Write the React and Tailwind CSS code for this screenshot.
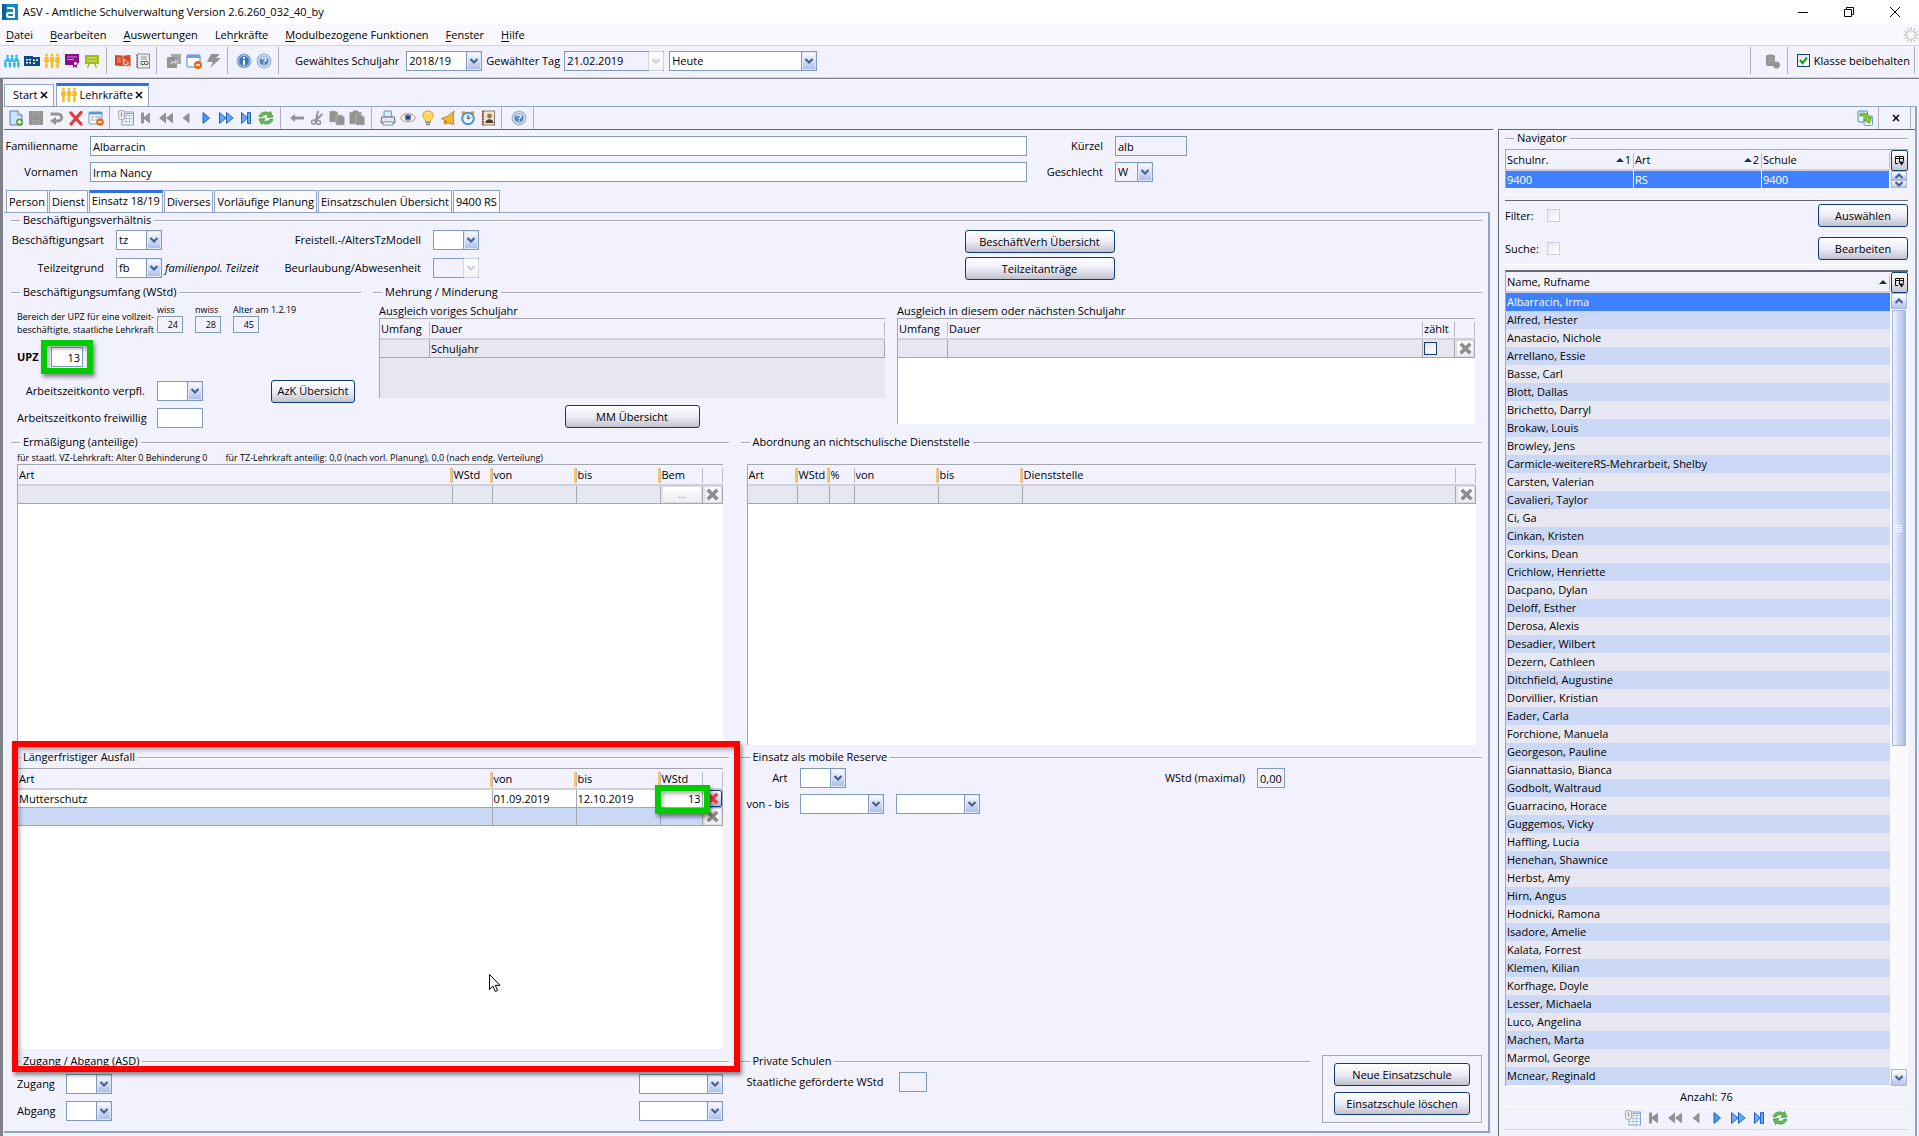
import React, { useState } from 'react';
import clsx from 'clsx';

const names = [
  'Albarracin, Irma', 'Alfred, Hester', 'Anastacio, Nichole', 'Arrellano, Essie', 'Basse, Carl',
  'Blott, Dallas', 'Brichetto, Darryl', 'Brokaw, Louis', 'Browley, Jens',
  'Carmicle-weitereRS-Mehrarbeit, Shelby', 'Carsten, Valerian', 'Cavalieri, Taylor', 'Ci, Ga',
  'Cinkan, Kristen', 'Corkins, Dean', 'Crichlow, Henriette', 'Dacpano, Dylan', 'Deloff, Esther',
  'Derosa, Alexis', 'Desadier, Wilbert', 'Dezern, Cathleen', 'Ditchfield, Augustine',
  'Dorvillier, Kristian', 'Eader, Carla', 'Forchione, Manuela', 'Georgeson, Pauline',
  'Giannattasio, Bianca', 'Godbolt, Waltraud', 'Guarracino, Horace', 'Guggemos, Vicky',
  'Haffling, Lucia', 'Henehan, Shawnice', 'Herbst, Amy', 'Hirn, Angus', 'Hodnicki, Ramona',
  'Isadore, Amelie', 'Kalata, Forrest', 'Klemen, Kilian', 'Korfhage, Doyle', 'Lesser, Michaela',
  'Luco, Angelina', 'Machen, Marta', 'Marmol, George', 'Mcnear, Reginald',
];

const menu = [
  ['', 'D', 'atei'],
  ['', 'B', 'earbeiten'],
  ['', 'A', 'uswertungen'],
  ['Leh', 'r', 'kräfte'],
  ['', 'M', 'odulbezogene Funktionen'],
  ['', 'F', 'enster'],
  ['', 'H', 'ilfe'],
];

const subTabs = ['Person', 'Dienst', 'Einsatz 18/19', 'Diverses', 'Vorläufige Planung', 'Einsatzschulen Übersicht', '9400 RS'];

/* ---------- Icons ---------- */

const G = '#939393';

const people = (x, c, s = 0) => (
  <g key={x} fill={c}>
    <circle cx={x} cy={2 + s} r="1.5" />
    <path d={`M${x - 2} ${4 + s}h4l.4 5h-1.2v${6 - s}h-2.4v-${6 - s}h-1.2z`} />
  </g>
);

const glyphs = {
  class: (
    <g fill="#2fb4e6">
      {[2, 6.5, 11].map((x) => (
        <g key={x}>
          <circle cx={x + 1.5} cy="3" r="1.3" />
          <path d={`M${x} 4.6h3v4h-3z`} />
        </g>
      ))}
      {[0, 4.5, 9, 13].map((x) => (
        <g key={x}>
          <circle cx={x + 1.3} cy="8.4" r="1.3" />
          <path d={`M${x} 10h2.8l-.4 4.5h-2z`} />
        </g>
      ))}
    </g>
  ),
  school: (
    <g>
      <path d="M0 3h9v1h7v9H0z" fill="#0f4c8a" />
      <path d="M2 6h2v1.500H2zM5 6h2v1.500H5zM2 9h2v1.500H2zM5 9h2v1.500H5zM9 6.500h2V8H9zM12 6.500h2V8h-2zM9 9.500h2V11H9z" fill="#fff" />
    </g>
  ),
  teachers: <g>{[2.500, 8, 13.500].map((x) => people(x, '#f9bd16'))}</g>,
  purple: (
    <g>
      <path d="M1 1h14v9h-2v5l-2-1.500L9 15v-3H1z" fill="#86118b" />
      <path d="M3 4h10M3 6.500h7" stroke="#c98ccb" />
      <circle cx="11.500" cy="10.500" r="2" fill="#fff" stroke="#86118b" />
    </g>
  ),
  board: (
    <g>
      <path d="M1 2h14v9h-3l1 4h-1l-2-4H6l-2 4H3l1-4H1z" fill="#9fbf10" />
      <path d="M3 5h10M3 8h10" stroke="#dce9a3" />
    </g>
  ),
  redBook: (
    <g>
      <path d="M0 2l7 .5 1 .5 1-.5 6.500-.5v11L9 13l-1 .5L7 13l-7-.5z" fill="#d9441f" />
      <path d="M8 3v10M2 5h4M2 7h4M2 9h4" stroke="#f6a48d" />
      <path d="M9 6l5 4-2 .2 2 3.500-1.500.8-1.500-3.500L9.500 12z" fill="#d9441f" stroke="#fff" strokeWidth=".7" />
    </g>
  ),
  notebook: (
    <g>
      <rect x="2.500" y="1" width="12" height="14" fill="#e9e9ec" stroke="#8a8a8e" />
      <path d="M2 2v13" stroke="#777" strokeWidth="2" strokeDasharray="1.200 1" />
      <path d="M6 4h6M6 6h6" stroke="#99a" />
      <rect x="6" y="8.500" width="3.500" height="3" fill="none" stroke="#555" rx="1" />
      <rect x="9.500" y="8.500" width="3.500" height="3" fill="none" stroke="#555" rx="1" />
    </g>
  ),
  windowsGray: (
    <g fill={G}>
      <path d="M5 1h10v10H5z" opacity=".8" />
      <rect x="1" y="4" width="10" height="11" rx="1" />
      <path d="M4 12c0-4 3-4 5-4V6l3 3-3 3v-2c-2 0-3 0-5 2z" fill="#c9c9d0" />
    </g>
  ),
  windowMinus: (
    <g>
      <rect x="1" y="2" width="13" height="12" rx="1" fill="#fff" stroke="#4e82c6" />
      <path d="M1 2h13v3H1z" fill="#6da0dd" />
      <circle cx="12" cy="12" r="4" fill="#e5681d" />
      <path d="M10 12h4" stroke="#fff" strokeWidth="1.500" />
    </g>
  ),
  bolt: <path d="M5 1h9l-4 4h5L4 15l3-6H1z" fill={G} />,
  info: (
    <g>
      <circle cx="8" cy="8" r="7" fill="#4a86c6" stroke="#9fb6d0" />
      <circle cx="8" cy="8" r="5.500" fill="#3f78b8" stroke="#dbe8f6" strokeWidth=".8" />
      <path d="M8 7v5M8 4v1.800" stroke="#fff" strokeWidth="2" />
    </g>
  ),
  help: (
    <g>
      <circle cx="8" cy="8" r="7" fill="#8fb0d6" stroke="#9fb6d0" />
      <circle cx="8" cy="8" r="5.300" fill="#4f86c2" stroke="#e6effa" strokeWidth="1.200" />
      <path d="M6 6.600c0-2.600 4-2.400 4-.2 0 1.400-2 1.400-2 2.800M8 10.400v1.400" stroke="#fff" strokeWidth="1.400" fill="none" />
    </g>
  ),
  server: (
    <g fill={G}>
      <path d="M2 3c0-2 9-2 9 0v10H4c-2 0-2-2-2-3z" />
      <path d="M4 5h6M4 7.500h6M4 10h5" stroke="#a6a6aa" strokeWidth=".8" />
      <circle cx="12.500" cy="12" r="3.500" />
    </g>
  ),
  newDoc: (
    <g>
      <path d="M2 1h8l4 4v10H2z" fill="#cfe4fa" stroke="#4a7fc0" />
      <path d="M10 1v4h4" fill="#fff" stroke="#4a7fc0" />
      <circle cx="11.500" cy="12" r="3.500" fill="#58a13a" />
      <path d="M11.500 10v4M9.500 12h4" stroke="#fff" strokeWidth="1.300" />
    </g>
  ),
  save: (
    <g>
      <path d="M1 1h14v14H2l-1-1z" fill={G} />
      <path d="M4 1.500h8v5H4zM4 10h8v5H4z" fill="#a1a1a5" />
      <path d="M5 3h6M5 5h6M5 12h6" stroke="#8a8a8a" strokeWidth=".8" />
    </g>
  ),
  undo: (
    <g>
      <path d="M2.500 4H10c5 0 5 7 0 7H7" fill="none" stroke={G} strokeWidth="2.800" />
      <path d="M8 7v8l-6-4z" fill={G} />
    </g>
  ),
  redX: <path d="M3 3l10 11M13 2.500L3 14" stroke="#e8383c" strokeWidth="3.200" strokeLinecap="round" />,
  form: (
    <g>
      <rect x="1" y="2" width="13" height="12" rx="1" fill="#fff" stroke="#6c98cf" />
      <path d="M1 2h13v2.500H1z" fill="#5e93d6" />
      <path d="M3 7h3M7 7h6M3 10h3M7 10h4" stroke="#6c98cf" strokeWidth="1.200" />
      <circle cx="12" cy="12" r="3.800" fill="#e5681d" />
      <path d="M10 12h4" stroke="#fff" strokeWidth="1.500" />
    </g>
  ),
  table: (
    <g>
      <rect x="4" y="2" width="11.500" height="13" fill="#fff" stroke="#7fa3d1" />
      <path d="M4 5.500h11M4 8.500h11M4 11.500h11M8 2v13M11.500 5v10" stroke="#a9c4e6" />
      <path d="M8 3.500h7" stroke="#7db36b" />
      <rect x=".5" y=".5" width="6" height="9" rx="2" fill="#ececec" stroke="#a9a9a9" />
      <path d="M3.500 2.500v4" stroke="#888" />
    </g>
  ),
  first: <path d="M3 2.500h3V7l6-4.500v11L6 9v4.500H3z" fill={G} />,
  back2: <path d="M8 2.500v11L1 8zM15 2.500v11L8 8z" fill={G} />,
  back: <path d="M11.500 2.500v11L4.500 8z" fill={G} />,
  next: <path d="M5 2.500v11L11.500 8z" fill="#4d95f0" stroke="#1f63c8" />,
  fwd2: <path d="M1.500 2.500v11L8 8zM8.500 2.500v11L15 8z" fill="#6aa9f5" stroke="#1f63c8" />,
  last: <path d="M3.500 2.500v11L9.500 8v5.500h3v-11h-3V8z" fill="#6aa9f5" stroke="#1f63c8" />,
  refresh: (
    <g fill="#6cba57" stroke="#3b8a35" strokeWidth=".7">
      <path d="M1 6.500C3 1.500 8 1 11 3l1.500-1.500L15 7l-6 .5L10.500 5.500C8 4 5 4.500 4 7z" />
      <path d="M15 9.500c-2 5-7 5.500-10 3.500l-1.500 1.500L1 9l6-.5-1.500 2c2.500 1.500 5.500 1 6.500-1.500z" />
    </g>
  ),
  arrow: <path d="M1 8l5-4v2.500h9v3H6V12z" fill={G} />,
  scissors: (
    <g stroke={G} fill="none">
      <path d="M9 1l-2 9M13.500 4L6 11" strokeWidth="2" />
      <circle cx="4.500" cy="12" r="2" strokeWidth="1.600" />
      <circle cx="9.500" cy="12.500" r="2" strokeWidth="1.600" />
    </g>
  ),
  copy: (
    <g fill={G} stroke="#c3c3c8" strokeWidth=".6">
      <path d="M.5 1H7l2 2v9H.5z" />
      <path d="M7 5h6l2.500 2.500V15H7z" />
    </g>
  ),
  paste: (
    <g fill={G} stroke="#c3c3c8" strokeWidth=".6">
      <path d="M.5 2h3l1-1.500h4l1 1.500h3v12H.5z" />
      <path d="M7 5h6l2.500 2.500V15H7z" />
    </g>
  ),
  printer: (
    <g>
      <path d="M4 1h7l1 6H4z" fill="#dcecfb" stroke="#6d90ba" />
      <path d="M1.500 7h13l.5 6H1z" fill="#e4e6ea" stroke="#666d78" />
      <path d="M3 12h10v3H3z" fill="#fff" stroke="#6d90ba" />
    </g>
  ),
  eye: (
    <g>
      <path d="M.5 8c3.500-6 11.500-6 15 0-3.500 5-11.500 5-15 0z" fill="#fff" stroke="#dcae8a" strokeWidth="1.300" />
      <circle cx="8" cy="7.500" r="3.300" fill="#4b7fc9" />
      <circle cx="8" cy="7.500" r="1.400" fill="#16294a" />
    </g>
  ),
  bulb: (
    <g>
      <path d="M8 1c6 0 6.500 6 2.500 9v2h-5v-2C1.500 7 2 1 8 1z" fill="#ffd75e" stroke="#e29a1c" />
      <path d="M5.500 12.500h5M6 14.500h4" stroke="#85878d" strokeWidth="1.600" />
      <path d="M6 4c.5-1 1.500-1.300 2.500-1.300" stroke="#fff" fill="none" />
    </g>
  ),
  bell: (
    <g>
      <path d="M14 1c-1 5-1 9 0 13.500L8.500 13 1.500 8.500C6 7.500 10 5 14 1z" fill="#f4b73a" stroke="#c9821a" />
      <circle cx="5.500" cy="12.500" r="2" fill="#d98b1d" />
    </g>
  ),
  clock: (
    <g>
      <circle cx="3.500" cy="3" r="2" fill="#e59f2d" />
      <circle cx="12.500" cy="3" r="2" fill="#e59f2d" />
      <circle cx="8" cy="8.500" r="5.800" fill="#eaf4fd" stroke="#4b93cf" strokeWidth="2" />
      <path d="M8 5v4l2.500-1.500" stroke="#234" fill="none" />
    </g>
  ),
  contact: (
    <g>
      <rect x="2.500" y="1" width="12" height="14" fill="#ece6dd" stroke="#8a7a6a" />
      <path d="M3 1v14" stroke="#b5432a" strokeWidth="2" strokeDasharray="1.500 1" />
      <circle cx="9.500" cy="6" r="2.400" fill="#b07038" />
      <path d="M5.500 13c0-5 8-5 8 0z" fill="#4a3a30" />
    </g>
  ),
  exportDoc: (
    <g>
      <rect x="1" y="1" width="9.500" height="11" rx="1" fill="#e6f1fc" stroke="#4a86c6" />
      <rect x="7" y="6" width="8.500" height="9.500" rx="1" fill="#e6f1fc" stroke="#6a9ed6" />
      <path d="M3 3.500c5-1 8 0 9 4l2.500-.5-2 6-6-3 2.500-1C8 6.500 6 5 3 6z" fill="#8fd21f" stroke="#3b8f1b" strokeWidth=".8" />
    </g>
  ),
};

const Icon = ({ name, className = 'size-4' }) => (
  <svg viewBox="0 0 16 16" className={className} aria-hidden="true">{glyphs[name]}</svg>
);

const ToolButton = ({ name }) => (
  <button type="button" aria-label={name} className="flex h-5 w-5 shrink-0 items-center justify-center">
    <Icon name={name} />
  </button>
);

const Sep = ({ className = 'mx-[5px]' }) => (
  <span className={clsx('w-px shrink-0 self-stretch bg-[#b0b0b8]', className)} />
);

const Chevron = ({ up = false, className = 'text-[#44618f]' }) => (
  <svg viewBox="0 0 10 8" className={clsx('h-2 w-[10px]', className)} aria-hidden="true">
    <path d={up ? 'M1.500 6L5 2.500 8.500 6' : 'M1.500 2L5 5.500 8.500 2'} fill="none" stroke="currentColor" strokeWidth="2.200" />
  </svg>
);

/* ---------- Form controls ---------- */

const Combo = ({ id, label, value = '', width = 'w-[46px]', disabled = false, light = true }) => (
  <div className={clsx('relative h-5 shrink-0', width)}>
    <select
      id={id}
      aria-label={label}
      defaultValue={value}
      disabled={disabled}
      className={clsx(
        'h-full w-full appearance-none border border-[#7f9aba] pr-4 pl-[2px] text-black opacity-100',
        disabled || !light ? 'bg-[#f2f2ff]' : 'bg-white'
      )}
    >
      <option value={value}>{value}</option>
    </select>
    <span
      className={clsx(
        'pointer-events-none absolute inset-y-0 right-0 flex w-4 items-center justify-center rounded-[2px] border bg-linear-to-b',
        disabled
          ? 'border-[#d5d5de] from-white to-[#f2f2f8]'
          : 'border-[#7f9aba] from-white to-[#a9bbe6] shadow-[inset_0_0_0_1px_#dfe7fa]'
      )}
    >
      <Chevron className={disabled ? 'text-[#d0d0d8]' : 'text-[#44618f]'} />
    </span>
  </div>
);

const TextBox = ({ id, label, value = '', className, plain = false }) => (
  <input
    id={id}
    aria-label={label}
    type="text"
    defaultValue={value}
    className={clsx('h-5 min-w-0 border border-[#7f9aba] px-[2px]', plain ? 'bg-[#f2f2ff]' : 'bg-white', className)}
  />
);

const Button = ({ children, className }) => (
  <button
    type="button"
    className={clsx(
      'h-[23px] shrink-0 rounded-[3px] border border-[#123c78] bg-linear-to-b from-white via-[#ececf6] to-[#c2c2cf] whitespace-nowrap',
      className
    )}
  >
    {children}
  </button>
);

const Check = ({ id, label, checked = false, muted = false }) => (
  <span className="relative inline-flex size-[13px] shrink-0">
    <input
      id={id}
      aria-label={label}
      type="checkbox"
      defaultChecked={checked}
      className={clsx(
        'peer size-full appearance-none border bg-linear-to-br from-[#e8e8ec] to-white',
        muted ? 'border-[#cfcfd6]' : 'border-[#123c78]'
      )}
    />
    <svg viewBox="0 0 13 13" className="pointer-events-none absolute inset-0 hidden peer-checked:block" aria-hidden="true">
      <path d="M3 6l2.500 3L10 3.500" fill="none" stroke="#1ea01e" strokeWidth="2.200" />
    </svg>
  </span>
);

const Rule = ({ className }) => <span className={clsx('h-0 border-t border-[#a8a8b0] shadow-[0_1px_0_#fff]', className)} />;

const Group = ({ title, className, children }) => (
  <section className={clsx('flex min-w-0 flex-col', className)}>
    <h2 className="flex h-[14px] shrink-0 items-center gap-[3px] whitespace-nowrap">
      <Rule className="w-[9px]" />
      {title}
      <Rule className="flex-1" />
    </h2>
    {children}
  </section>
);

/* ---------- Tables ---------- */

const DeleteButton = ({ active = false }) => (
  <button
    type="button"
    aria-label="Löschen"
    className={clsx(
      'flex h-[17px] w-full items-center justify-center rounded-[2px] border bg-linear-to-b',
      active ? 'border-[#123c78] from-white to-[#a9bbe6]' : 'border-[#dcdce2] from-white to-[#ececf2]'
    )}
  >
    <svg viewBox="0 0 14 14" className="size-[15px] shrink-0" aria-hidden="true">
      <path d="M2.500 2.500l9 9M11.500 2.500l-9 9" stroke={active ? '#e8464a' : '#8d8d8d'} strokeWidth="3.400" />
    </svg>
  </button>
);

const Grid = ({ cols, rows, className }) => (
  <div className={clsx('border-t border-l border-[#a6a6ae]', className)}>
    <table className="w-full table-fixed border-separate border-spacing-0">
      <colgroup>
        {cols.map((c, i) => <col key={i} className={c.w} />)}
      </colgroup>
      <thead>
        <tr className="bg-[#f2f2ff]">
          {cols.map((c, i) => (
            <th key={i} className="relative h-[21px] overflow-hidden border-b-2 border-[#cfcfdb] p-0 pl-px text-left font-normal whitespace-nowrap">
              {c.name}
              <span className="absolute top-[3px] right-0 bottom-px w-px bg-[#b9b9c4]" />
              {cols[i + 1]?.mark && <span className="absolute top-[3px] right-px bottom-px w-[2px] bg-[#fcc463]" />}
            </th>
          ))}
        </tr>
      </thead>
      <tbody>
        {rows.map((row, r) => (
          <tr key={r} className={row.bg}>
            {row.cells.map((cell, i) => (
              <td key={i} className={clsx('h-[18px] border-r border-b border-[#a6a6ae] p-0 pl-px whitespace-nowrap', cols[i].right && 'pr-px text-right')}>
                {cell}
              </td>
            ))}
          </tr>
        ))}
      </tbody>
    </table>
  </div>
);

const gray = 'bg-[#e7e7f1]';

const Highlight = ({ className }) => (
  <span className={clsx('pointer-events-none absolute z-10 border-6 shadow-[2px_3px_4px_rgba(0,0,0,0.45),inset_2px_3px_4px_rgba(0,0,0,0.3)]', className)} />
);

/* ---------- Sections ---------- */

const TitleBar = () => (
  <header className="flex h-[23px] items-center bg-white pr-[18px] pl-[2px]">
    <svg viewBox="0 0 16 16" className="size-4" aria-hidden="true">
      <rect width="16" height="16" fill="#1787c0" />
      <path d="M0 0h4v16H0z" fill="#0d5f96" />
      <path d="M5 4h5q2 0 2 2v7H7q-2 0-2-2t2-2h4" fill="none" stroke="#fff" strokeWidth="2" />
    </svg>
    <h1 className="ml-[5px]">ASV - Amtliche Schulverwaltung Version 2.6.260_032_40_by</h1>
    <div className="ml-auto flex items-center gap-[34px]">
      <button type="button" aria-label="Minimieren">
        <svg viewBox="0 0 12 12" className="size-3"><path d="M1 6.500h10" stroke="#000" /></svg>
      </button>
      <button type="button" aria-label="Wiederherstellen">
        <svg viewBox="0 0 12 12" className="size-3"><path d="M1.500 3.500h7v7h-7zM3.500 3.500v-2h7v7h-2" fill="none" stroke="#000" /></svg>
      </button>
      <button type="button" aria-label="Schließen">
        <svg viewBox="0 0 12 12" className="size-3"><path d="M1 1l10 10M11 1L1 11" stroke="#000" /></svg>
      </button>
    </div>
  </header>
);

const MenuBar = () => (
  <nav className="flex h-[23px] items-center gap-[17px] border-b border-[#d4d4de] bg-[#f9f9ff] pt-[2px] pl-[6px]">
    {menu.map(([pre, key, post]) => (
      <a key={post} href="#" className="whitespace-nowrap">
        {pre}<u className="underline-offset-2">{key}</u>{post}
      </a>
    ))}
    <svg viewBox="0 0 16 16" className="ml-auto size-4" aria-hidden="true">
      <g stroke="#b9b9bd" strokeWidth="1.200">
        {[0, 30, 60, 90, 120, 150, 180, 210, 240, 270, 300, 330].map((a) => (
          <path key={a} d="M8 .5v4" transform={`rotate(${a} 8 8)`} />
        ))}
      </g>
    </svg>
  </nav>
);

const MainToolbar = () => (
  <div className="flex h-8 items-center border-b border-[#cfcfda] pt-px pb-[3px] pl-[2px]">
    {['class', 'school', 'teachers', 'purple', 'board'].map((n) => <ToolButton key={n} name={n} />)}
    <Sep className="mr-[6px] ml-1" />
    {['redBook', 'notebook'].map((n) => <ToolButton key={n} name={n} />)}
    <Sep className="mr-[7px] ml-[3px]" />
    {['windowsGray', 'windowMinus', 'bolt'].map((n) => <ToolButton key={n} name={n} />)}
    <Sep className="mr-[6px] ml-[3px]" />
    {['info', 'help'].map((n) => <ToolButton key={n} name={n} />)}
    <Sep className="mr-4 ml-1" />
    <label htmlFor="jahr" className="mr-[7px] whitespace-nowrap">Gewähltes Schuljahr</label>
    <Combo id="jahr" value="2018/19" width="w-[76px]" />
    <label htmlFor="tag" className="mx-1 whitespace-nowrap">Gewählter Tag</label>
    <Combo id="tag" value="21.02.2019" width="w-[100px]" disabled />
    <span className="w-[5px]" />
    <Combo id="heute" label="Heute" value="Heute" width="w-[148px]" />
    <Sep className="mr-[11px] ml-auto" />
    <ToolButton name="server" />
    <Sep className="mr-[9px] ml-[5px]" />
    <Check id="klasse" checked />
    <label htmlFor="klasse" className="ml-1 whitespace-nowrap">Klasse beibehalten</label>
    <Sep className="mr-1 ml-1" />
  </div>
);

const CloseX = () => (
  <svg viewBox="0 0 8 8" className="size-2" aria-hidden="true"><path d="M1 1l6 6M7 1L1 7" stroke="#000" strokeWidth="1.500" /></svg>
);

const DocTabs = () => (
  <div className="flex h-[27px] items-end gap-[2px]">
    <div className="flex h-[22px] items-center gap-[3px] border border-b-0 border-[#8fa3c4] bg-[#fafaff] pr-[5px] pb-[2px] pl-2">
      Start
      <button type="button" aria-label="Start schließen"><CloseX /></button>
    </div>
    <div className="flex h-[23px] items-center gap-[2px] border border-t-3 border-b-0 border-[#8fa3c4] border-t-[#2f6fea] bg-white pr-[5px] pb-[3px] pl-1">
      <Icon name="teachers" />
      Lehrkräfte
      <button type="button" aria-label="Lehrkräfte schließen"><CloseX /></button>
    </div>
  </div>
);

const EditToolbar = () => (
  <div className="flex h-[23px] items-center border-t border-[#8fa3c4] pl-[2px]">
    {['newDoc', 'save', 'undo', 'redX', 'form'].map((n) => <ToolButton key={n} name={n} />)}
    <Sep className="mr-[6px] ml-[3px]" />
    {['table', 'first', 'back2', 'back', 'next', 'fwd2', 'last', 'refresh'].map((n) => <ToolButton key={n} name={n} />)}
    <Sep className="mr-[6px] ml-1" />
    {['arrow', 'scissors', 'copy', 'paste'].map((n) => <ToolButton key={n} name={n} />)}
    <Sep className="mr-[6px] ml-1" />
    {['printer', 'eye', 'bulb', 'bell', 'clock', 'contact'].map((n) => <ToolButton key={n} name={n} />)}
    <Sep className="mr-[7px] ml-[3px]" />
    <ToolButton name="help" />
    <Sep className="ml-1" />
    <div className="ml-auto flex items-center self-stretch">
      <ToolButton name="exportDoc" />
      <Sep className="mr-[13px] ml-[3px]" />
      <button type="button" aria-label="Navigator schließen"><CloseX /></button>
      <Sep className="mr-1 ml-[10px]" />
    </div>
  </div>
);

const Verhaeltnis = () => (
  <Group title="Beschäftigungsverhältnis">
    <div className="flex pt-[3px] pb-[5px]">
      <div className="grid grid-cols-[93px_46px_auto] content-start items-center gap-y-2">
        <label htmlFor="art" className="text-right">Beschäftigungsart</label>
        <span className="pl-3"><Combo id="art" value="tz" /></span>
        <span />
        <label htmlFor="grund" className="text-right">Teilzeitgrund</label>
        <span className="pl-3"><Combo id="grund" value="fb" /></span>
        <i className="w-[122px] pl-[15px] whitespace-nowrap">familienpol. Teilzeit</i>
      </div>
      <div className="grid grid-cols-[138px_58px] content-start items-center gap-y-2 pl-[11px]">
        <label htmlFor="modell" className="text-right whitespace-nowrap">Freistell.-/AltersTzModell</label>
        <span className="pl-3"><Combo id="modell" /></span>
        <label htmlFor="beurl" className="text-right whitespace-nowrap">Beurlaubung/Abwesenheit</label>
        <span className="pl-3"><Combo id="beurl" disabled /></span>
      </div>
      <div className="flex flex-1 justify-center pl-[118px]">
        <div className="flex flex-col gap-1">
          <Button className="w-[150px]">BeschäftVerh Übersicht</Button>
          <Button className="w-[150px]">Teilzeitanträge</Button>
        </div>
      </div>
    </div>
  </Group>
);

const Umfang = () => (
  <Group title="Beschäftigungsumfang (WStd)" className="w-[350px] shrink-0">
    <div className="flex flex-col pt-[5px] pb-[7px] pl-[6px]">
      <div className="flex text-[9px] leading-3">
        <p className="w-[140px] pt-[6px] leading-[13px] whitespace-nowrap">
          Bereich der UPZ für eine vollzeit-<br />beschäftigte, staatliche Lehrkraft
        </p>
        {[['wiss', '24'], ['nwiss', '28'], ['Alter am 1.2.19', '45']].map(([l, v]) => (
          <div key={l} className="w-[38px]">
            <label htmlFor={l} className="block whitespace-nowrap">{l}</label>
            <input id={l} defaultValue={v} className="block h-[17px] w-[26px] border border-[#7f9aba] bg-[#f2f2ff] px-1 text-right" />
          </div>
        ))}
      </div>
      <div className="mt-[11px] flex items-center">
        <label htmlFor="upz" className="w-[34px] font-bold">UPZ</label>
        <span className="relative flex">
          <TextBox id="upz" value="13" className="w-8 text-right" />
          <Highlight className="-inset-x-[10px] -inset-y-[7px] border-[#00cc00]" />
        </span>
      </div>
      <div className="mt-[14px] flex items-center">
        <label htmlFor="azk" className="mr-3 w-[128px] text-right whitespace-nowrap">Arbeitszeitkonto verpfl.</label>
        <Combo id="azk" />
        <Button className="-my-[2px] ml-[68px] w-[84px]">AzK Übersicht</Button>
      </div>
      <div className="mt-[7px] flex items-center">
        <label htmlFor="azf" className="mr-3 w-[128px] text-right whitespace-nowrap">Arbeitszeitkonto freiwillig</label>
        <TextBox id="azf" className="w-[46px]" />
      </div>
    </div>
  </Group>
);

const Mehrung = () => (
  <Group title="Mehrung / Minderung" className="flex-1">
    <div className="grid grid-cols-[507fr_579fr] gap-x-3 pt-[5px] pr-[7px] pl-[6px]">
      <div className="flex flex-col">
        <h3 className="h-[14px] leading-[14px]">Ausgleich voriges Schuljahr</h3>
        <Grid
          className="min-h-20 bg-[#e7e7f1]"
          cols={[{ name: 'Umfang', w: 'w-[50px]' }, { name: 'Dauer' }]}
          rows={[{ bg: gray, cells: ['', 'Schuljahr'] }]}
        />
        <Button className="mt-[7px] w-[135px] self-center">MM Übersicht</Button>
      </div>
      <div className="flex flex-col">
        <h3 className="h-[14px] leading-[14px]">Ausgleich in diesem oder nächsten Schuljahr</h3>
        <Grid
          className="min-h-[106px] bg-white"
          cols={[{ name: 'Umfang', w: 'w-[50px]' }, { name: 'Dauer' }, { name: 'zählt', w: 'w-[32px]' }, { w: 'w-5' }]}
          rows={[{
            bg: gray,
            cells: ['', '', <span className="flex"><Check label="zählt" /></span>, <DeleteButton />],
          }]}
        />
      </div>
    </div>
  </Group>
);

const Ermaessigung = () => (
  <Group title="Ermäßigung (anteilige)">
    <div className="flex flex-1 flex-col pt-[3px] pr-[6px] pl-[6px]">
      <p className="flex gap-[18px] text-[9px] leading-3 whitespace-nowrap">
        <span>für staatl. VZ-Lehrkraft: Alter 0 Behinderung 0</span>
        <span>für TZ-Lehrkraft anteilig: 0,0 (nach vorl. Planung), 0,0 (nach endg. Verteilung)</span>
      </p>
      <Grid
        className="min-h-[281px] flex-1 bg-white"
        cols={[
          { name: 'Art' }, { name: 'WStd', w: 'w-10', mark: true }, { name: 'von', w: 'w-[84px]', mark: true },
          { name: 'bis', w: 'w-[84px]', mark: true }, { name: 'Bem', w: 'w-[42px]', mark: true }, { w: 'w-5' },
        ]}
        rows={[{
          bg: gray,
          cells: ['', '', '', '',
            <button type="button" className="block h-[17px] w-full rounded-[2px] border border-[#dcdce2] bg-linear-to-b from-white to-[#ececf2] text-[9px] text-gray-500">...</button>,
            <DeleteButton />],
        }]}
      />
    </div>
  </Group>
);

const Abordnung = () => (
  <Group title="Abordnung an nichtschulische Dienststelle">
    <div className="flex flex-1 flex-col pt-[15px] pr-[6px] pl-[6px]">
      <Grid
        className="min-h-[281px] flex-1 bg-white"
        cols={[
          { name: 'Art', w: 'w-[50px]' }, { name: 'WStd', w: 'w-8', mark: true }, { name: '%', w: 'w-[25px]', mark: true },
          { name: 'von', w: 'w-[84px]' }, { name: 'bis', w: 'w-[84px]', mark: true }, { name: 'Dienststelle', mark: true }, { w: 'w-5' },
        ]}
        rows={[{ bg: gray, cells: ['', '', '', '', '', '', <DeleteButton />] }]}
      />
    </div>
  </Group>
);

const Ausfall = () => (
  <Group title="Längerfristiger Ausfall" className="relative">
    <div className="relative flex flex-1 flex-col pt-1 pr-[6px] pl-[6px]">
      <Grid
        className="min-h-[281px] flex-1 bg-white"
        cols={[
          { name: 'Art' }, { name: 'von', w: 'w-[84px]', mark: true }, { name: 'bis', w: 'w-[84px]', mark: true },
          { name: 'WStd', w: 'w-[42px]', mark: true, right: true }, { w: 'w-5' },
        ]}
        rows={[
          {
            bg: 'bg-white',
            cells: ['Mutterschutz', '01.09.2019', '12.10.2019',
              <span className="relative block">
                13
                <Highlight className="-top-[7px] -right-[9px] -bottom-2 -left-[7px] border-[#00cc00]" />
              </span>,
              <DeleteButton active />],
          },
          { bg: 'bg-[#cbd8f5]', cells: ['', '', '', '', <DeleteButton />] },
        ]}
      />
      {/* mouse pointer */}
      <svg viewBox="0 0 12 19" className="absolute top-[210px] left-[478px] h-[19px] w-3" aria-hidden="true">
        <path d="M.5 .5v15l3.500-3.300 2.300 5.300 2.300-1-2.300-5.200h4.700z" fill="#fff" stroke="#000" />
      </svg>
    </div>
    <Highlight className="-top-[9px] -right-[11px] -bottom-[23px] left-px border-[#ff0000]" />
  </Group>
);

const Reserve = () => (
  <Group title="Einsatz als mobile Reserve">
    <div className="flex flex-col gap-[6px] pt-1 pl-[6px]">
      <div className="flex items-center">
        <label htmlFor="rart" className="mr-3 w-[41px] text-right">Art</label>
        <Combo id="rart" />
        <label htmlFor="max" className="mr-3 ml-auto whitespace-nowrap">WStd (maximal)</label>
        <TextBox id="max" value="0,00" plain className="mr-[197px] w-7" />
      </div>
      <div className="flex items-center">
        <label htmlFor="rvon" className="mr-3 w-[41px] text-right whitespace-nowrap">von - bis</label>
        <Combo id="rvon" width="w-[84px]" />
        <span className="w-3" />
        <Combo id="rbis" label="bis" width="w-[84px]" />
      </div>
    </div>
  </Group>
);

const Zugang = () => (
  <Group title="Zugang / Abgang (ASD)">
    <div className="flex flex-col gap-[7px] pt-[6px] pr-[6px] pl-[6px]">
      {['Zugang', 'Abgang'].map((l) => (
        <div key={l} className="flex items-center">
          <label htmlFor={l} className="w-[49px]">{l}</label>
          <Combo id={l} />
          <span className="flex-1" />
          <Combo id={`${l}-datum`} label={`${l} Datum`} width="w-[84px]" />
        </div>
      ))}
    </div>
  </Group>
);

const Privat = () => (
  <div className="flex gap-3">
    <Group title="Private Schulen" className="flex-1">
      <div className="flex items-center pt-1 pl-[6px]">
        <label htmlFor="privat" className="w-[152px] whitespace-nowrap">Staatliche geförderte WStd</label>
        <TextBox id="privat" plain className="w-7" />
      </div>
    </Group>
    <div className="mt-px flex flex-col gap-[6px] self-start border border-[#a8a8b0] px-[11px] py-[7px] shadow-[1px_1px_0_#fff]">
      <Button className="w-[136px]">Neue Einsatzschule</Button>
      <Button className="w-[136px]">Einsatzschule löschen</Button>
    </div>
  </div>
);

const ColumnPicker = () => (
  <button type="button" aria-label="Spalten" className="flex h-[21px] w-[17px] shrink-0 items-center justify-center rounded-[2px] border border-[#123c78] bg-linear-to-b from-white to-[#c6c6d2]">
    <svg viewBox="0 0 11 11" className="size-[11px] shrink-0">
      <path d="M4 8.500H1.500v-7h8V6M1.500 3.500h8M5.500 1.500V7" fill="none" stroke="#111" />
      <path d="M4.500 6.500h6l-3 4z" fill="#111" />
    </svg>
  </button>
);

const ScrollArrow = ({ up, className }) => (
  <button type="button" aria-label={up ? 'Hoch' : 'Runter'} className={clsx('flex w-4 shrink-0 items-center justify-center border border-[#a9b7d6] bg-linear-to-b from-white to-[#b4c4ec]', className)}>
    <Chevron up={up} />
  </button>
);

const SortMark = ({ n }) => (
  <span className="absolute top-0 right-[3px] flex h-full items-center gap-px">
    <svg viewBox="0 0 8 4" className="h-1 w-2"><path d="M0 4l4-4 4 4z" fill="#1c3652" /></svg>{n}
  </span>
);

const navHead = 'relative h-[21px] border-b-2 border-[#cfcfdb] p-0 pl-px text-left font-normal';

const Navigator = () => {
  const [selected, setSelected] = useState(0);
  return (
    <aside className="flex w-[417px] shrink-0 flex-col border-t border-l border-[#66666e] pt-px pr-[7px] pb-[6px] pl-[6px]">
      <Group title="Navigator">
        <div className="mt-1 flex border-t border-l border-[#a6a6ae]">
          <table className="w-full min-w-0 flex-1 table-fixed border-separate border-spacing-0">
            <thead>
              <tr>
                {[['Schulnr.', '1'], ['Art', '2'], ['Schule', '']].map(([h, n]) => (
                  <th key={h} className={navHead}>
                    {h}
                    {n && <SortMark n={n} />}
                    <span className="absolute top-[3px] right-0 bottom-px w-px bg-[#b9b9c4]" />
                  </th>
                ))}
              </tr>
            </thead>
            <tbody>
              <tr className="bg-[#3f80ff] text-white">
                {['9400', 'RS', '9400'].map((c, i) => (
                  <td key={i} className="h-[17px] border-r border-white p-0 pl-px">{c}</td>
                ))}
              </tr>
            </tbody>
          </table>
          <div className="flex w-[18px] shrink-0 flex-col items-center">
            <ColumnPicker />
            <ScrollArrow up className="h-[9px]" />
            <ScrollArrow className="h-2" />
          </div>
        </div>
      </Group>
      <div className="mt-[6px] border-t border-white pb-[5px]" />
      <div className="border-t border-[#66666e] pt-[3px]">
        {[['Filter:', 'Auswählen'], ['Suche:', 'Bearbeiten']].map(([l, b], i) => (
          <div key={l} className={clsx('flex items-center', i > 0 && 'mt-[10px]')}>
            <label htmlFor={l} className="w-[42px]">{l}</label>
            <Check id={l} muted />
            <Button className="ml-auto w-[90px]">{b}</Button>
          </div>
        ))}
      </div>
      <div className="mt-1 border-t border-white pb-[5px]" />
      <div className="flex flex-1 border-t-2 border-l border-[#66666e] border-l-[#a6a6ae]">
        <table className="w-full min-w-0 flex-1 table-fixed border-separate border-spacing-0 self-start">
          <thead>
            <tr>
              <th className={navHead}>
                Name, Rufname
                <SortMark />
                <span className="absolute top-[3px] right-0 bottom-px w-px bg-[#b9b9c4]" />
              </th>
            </tr>
          </thead>
          <tbody>
            {names.map((n, i) => (
              <tr
                key={n}
                onClick={() => setSelected(i)}
                className={i === selected ? 'bg-[#3f80ff] text-white' : i % 2 ? 'bg-[#cbd8f5]' : 'bg-[#e7e7f1]'}
              >
                <td className="h-[18px] p-0 pl-px leading-[18px]">{n}</td>
              </tr>
            ))}
          </tbody>
        </table>
        <div className="flex w-[18px] shrink-0 flex-col items-center bg-[#f9f9ff]">
          <ColumnPicker />
          <ScrollArrow up className="h-4" />
          <div className="mt-px flex h-[436px] w-[14px] flex-col items-center justify-center gap-px border border-[#a3b5e0] bg-linear-to-r from-[#f0f4ff] to-[#a9bcec]">
            {[0, 1, 2, 3].map((i) => <span key={i} className="h-px w-[6px] bg-white" />)}
          </div>
          <ScrollArrow className="mt-auto h-[17px]" />
        </div>
      </div>
      <p className="border-t border-white text-center leading-[19px]">Anzahl: 76</p>
      <div className="flex h-6 items-center justify-center gap-px border-t border-b border-t-white border-b-[#d4d4e4]">
        {['table', 'first', 'back2', 'back', 'next', 'fwd2', 'last', 'refresh'].map((n) => <ToolButton key={n} name={n} />)}
      </div>
    </aside>
  );
};

export default function App() {
  return (
    <div className="flex min-h-screen flex-col bg-[#f2f2ff] font-['Open_Sans','Noto_Sans',sans-serif] text-[11px] leading-[14px] text-black">
      <TitleBar />
      <MenuBar />
      <MainToolbar />
      <div className="flex flex-1 flex-col border-t border-l-3 border-[#808088] pl-px">
        <DocTabs />
        <div className="mr-[2px] flex flex-1 flex-col border-r-2 border-b border-[#8fa3c4]">
          <EditToolbar />
          <div className="flex flex-1 gap-[5px]">
            <main className="flex min-w-0 flex-1 flex-col border-t border-[#66666e] pt-[6px]">
              <div className="flex">
                <div className="grid flex-1 grid-cols-[74px_1fr] items-center gap-x-3 gap-y-[6px]">
                  <label htmlFor="fam" className="text-right">Familienname</label>
                  <TextBox id="fam" value="Albarracin" />
                  <label htmlFor="vor" className="text-right">Vornamen</label>
                  <TextBox id="vor" value="Irma Nancy" />
                </div>
                <div className="grid w-[466px] grid-cols-[76px_auto] content-start items-center justify-start gap-x-3 gap-y-[6px]">
                  <label htmlFor="kuerzel" className="text-right">Kürzel</label>
                  <TextBox id="kuerzel" value="alb" plain className="w-[72px]" />
                  <label htmlFor="geschlecht" className="text-right">Geschlecht</label>
                  <Combo id="geschlecht" value="W" width="w-[38px]" light={false} />
                </div>
              </div>
              <div className="mt-2 flex items-end gap-px pl-[2px]" role="tablist">
                {subTabs.map((t) => (
                  <button
                    key={t}
                    type="button"
                    role="tab"
                    className={clsx(
                      'h-[22px] border border-b-0 border-[#8fa3c4] px-[2px] whitespace-nowrap',
                      t === 'Einsatz 18/19' ? 'border-t-3 border-t-[#2f6fea] bg-white pb-[3px]' : 'bg-[#fafaff]'
                    )}
                  >
                    {t}
                  </button>
                ))}
              </div>
              <div className="mr-[3px] mb-[3px] flex flex-1 flex-col border-t border-r-2 border-b-2 border-[#8fa3c4] pr-[6px] pb-2 pl-[7px]">
                <Verhaeltnis />
                <div className="flex gap-3">
                  <Umfang />
                  <Mehrung />
                </div>
                <div className="grid flex-auto grid-cols-[718fr_742fr] gap-x-3">
                  <Ermaessigung />
                  <Abordnung />
                </div>
                <div className="mt-[5px] grid flex-auto grid-cols-[718fr_742fr] gap-x-3">
                  <Ausfall />
                  <Reserve />
                </div>
                <div className="mt-[5px] grid grid-cols-[718fr_742fr] gap-x-3">
                  <Zugang />
                  <Privat />
                </div>
              </div>
            </main>
            <Navigator />
          </div>
        </div>
      </div>
    </div>
  );
}
